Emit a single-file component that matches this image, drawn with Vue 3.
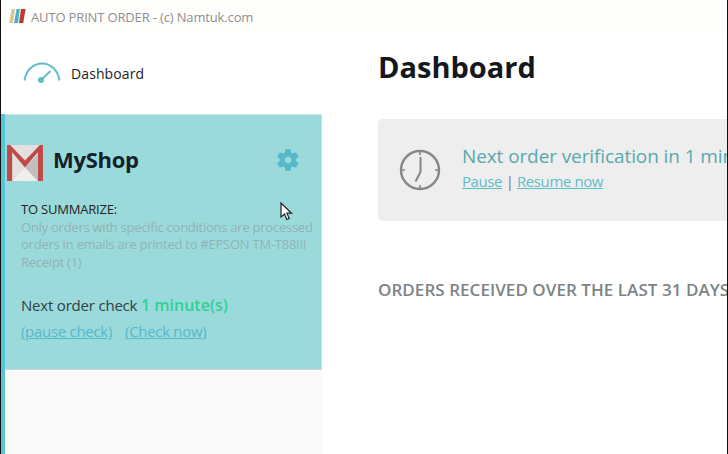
<template>
  <div class="window">
    <header class="titlebar">
      <svg class="app-logo" width="17" height="16" viewBox="0 0 17 16">
        <path d="M2.500 1h3.600L3.800 15H.4z" fill="#d6c88c" />
        <path d="M7.500 1h3.400L9 15H5z" fill="#46b4c6" />
        <path d="M12 1h4.600L14.200 15H10z" fill="#c0392f" />
      </svg>
      <span class="title">AUTO PRINT ORDER - (c) Namtuk.com</span>
    </header>

    <div class="body">
      <aside class="sidebar">
        <div class="nav">
          <svg class="gauge" width="38" height="24" viewBox="0 0 38 24" fill="none">
            <path d="M1.500 20.500C3 10 10.500 3.500 19 3.500s16 6.500 17.500 17" stroke="#62bccb" stroke-width="2" />
            <path d="M18 20 27.500 11" stroke="#62bccb" stroke-width="2" />
            <circle cx="18" cy="20" r="3" fill="#62bccb" />
          </svg>
          <span>Dashboard</span>
        </div>

        <div class="panel">
          <section class="shop">
            <div class="shop-head">
              <svg class="gmail" width="38" height="38" viewBox="0 0 37 37">
                <rect x="1" y="1" width="35" height="35" fill="#e3e1df" />
                <path d="M6 36V8l12.500 15L31 8v28h5V1h-3L18.500 16 4 1H1v35z" fill="#bf4a4a" />
                <path d="M6 36 18.500 23 31 36z" fill="#f0eeec" />
                <path d="M18.500 23 31 10v26z" fill="#c2c0be" />
              </svg>
              <h2>MyShop</h2>
              <svg class="cog" width="26" height="26" viewBox="0 0 24 24">
                <path fill="#56b9ca" d="M19.400 13c.05-.33.07-.66.07-1s-.02-.67-.07-1l2.100-1.640a.5.5 0 0 0 .12-.64l-2-3.460a.5.5 0 0 0-.6-.22l-2.490 1a7.300 7.300 0 0 0-1.730-1l-.38-2.650A.5.5 0 0 0 13.930 2h-4a.5.5 0 0 0-.49.42L9.060 5.070a7.600 7.600 0 0 0-1.730 1l-2.490-1a.5.5 0 0 0-.6.22l-2 3.460a.5.5 0 0 0 .12.640L4.460 11c-.05.33-.08.67-.08 1s.03.67.08 1l-2.100 1.640a.5.5 0 0 0-.12.64l2 3.460c.12.22.38.3.6.22l2.490-1c.52.4 1.100.74 1.730 1l.38 2.650c.04.24.25.42.49.42h4c.24 0 .45-.18.49-.42l.38-2.650a7.600 7.600 0 0 0 1.730-1l2.490 1c.22.08.48 0 .6-.22l2-3.460a.5.5 0 0 0-.12-.64zM12 15a3 3 0 1 1 0-6 3 3 0 0 1 0 6z" />
              </svg>
            </div>

            <div class="summary">
              <div class="summary-title">TO SUMMARIZE:</div>
              <p>Only orders with specific conditions are processed<br />orders in emails are printed to #EPSON TM-T88III<br />Receipt (1)</p>
            </div>

            <div class="next">Next order check <b>1 minute(s)</b></div>
            <div class="links"><a>(pause check)</a><a>(Check now)</a></div>
          </section>
          <div class="panel-rest"></div>
        </div>
      </aside>

      <main class="main">
        <h1>Dashboard</h1>
        <div class="notice">
          <svg class="clock" width="42" height="42" viewBox="0 0 42 42" fill="none" stroke="#868686">
            <circle cx="21" cy="21" r="19" stroke-width="2.400" />
            <path d="M21 2v4M21 36v4M2 21h4M36 21h4" stroke-width="1.600" />
            <path d="M21.500 8v15l-5 9.500" stroke-width="2" />
          </svg>
          <div class="notice-text">
            <div class="notice-title">Next order verification in 1 minute(s)</div>
            <div class="notice-links"><a>Pause</a> | <a>Resume now</a></div>
          </div>
        </div>
        <h3>ORDERS RECEIVED OVER THE LAST 31 DAYS</h3>
      </main>
    </div>

    <svg class="cursor" width="13" height="19" viewBox="0 0 13 19">
      <path d="M1 1v14l3.500-3 2.300 5.500 2.400-1-2.300-5.300H11.500z" fill="#fff" stroke="#222" stroke-width="1.200" />
    </svg>
  </div>
</template>

<script setup>
</script>

<style>
html, body { margin: 0; background: #fff; }
</style>

<style scoped>
.window {
  position: relative;
  width: 728px;
  height: 454px;
  box-sizing: border-box;
  overflow: hidden;
  border-left: 1px solid #111;
  border-right: 1px solid #111;
  background: #fff;
  font-family: "Open Sans", "Noto Sans", sans-serif;
  display: flex;
  flex-direction: column;
}

.titlebar {
  height: 34px;
  flex: none;
  display: flex;
  align-items: center;
  padding-left: 8px;
  gap: 5px;
  background: #fefefc;
}
.app-logo { margin-top: -3px; }
.title { color: #8f8f8f; font-size: 13px; letter-spacing: -0.15px; }

.body { flex: 1; display: flex; min-height: 0; }

.sidebar { width: 321px; flex: none; display: flex; flex-direction: column; }

.nav {
  height: 80px;
  flex: none;
  display: flex;
  align-items: center;
  padding-left: 22px;
  gap: 10px;
  font-size: 14px;
  letter-spacing: 0.1px;
  color: #222;
}
.nav span { margin-top: -2px; }
.gauge { margin-top: -4px; }

.panel {
  flex: 1;
  display: flex;
  flex-direction: column;
  border-left: 4px solid #5cc4d6;
}
.shop {
  height: 256px;
  box-sizing: border-box;
  background: #9bdadb;
  border-top: 1px solid #c4ecee;
  border-bottom: 1px solid #c9d6d6;
  border-right: 1px solid #c8e0e0;
}
.panel-rest { flex: 1; background: #f9f9f9; }

.shop-head {
  display: flex;
  align-items: center;
  height: 37px;
  margin-top: 29px;
  margin-left: 1px;
}
.shop-head h2 {
  margin: -8px 0 0 9px;
  font-size: 22px;
  font-weight: 700;
  letter-spacing: -0.3px;
  color: #14202a;
}
.cog { margin-left: auto; margin-right: 20px; margin-top: -6px; }

.summary { margin: 20px 0 0 16px; font-size: 13px; line-height: 17.700px; }
.summary-title { color: #222; letter-spacing: -0.2px; }
.summary p { margin: 0; color: #8fb3b5; letter-spacing: -0.25px; white-space: nowrap; }

.next { margin: 22px 0 0 16px; font-size: 15px; line-height: 22px; letter-spacing: -0.2px; color: #2f4244; }
.next b { font-size: 16px; font-weight: 600; letter-spacing: 0; color: #2fd196; }

.links { margin: 5px 0 0 16px; font-size: 15px; letter-spacing: -0.3px; display: flex; gap: 13px; }
.links a { color: #55b8cc; text-decoration: underline; }

.main { flex: 1; min-width: 0; padding-left: 56px; overflow: hidden; }
.main h1 {
  margin: 13px 0 0;
  font-size: 29px;
  line-height: 40px;
  font-weight: 700;
  color: #14181c;
}
.notice {
  margin-top: 32px;
  height: 102px;
  width: 420px;
  box-sizing: border-box;
  background: #eeeeee;
  border-radius: 5px;
  display: flex;
  align-items: center;
  padding-left: 21px;
  gap: 21px;
}
.notice-text { white-space: nowrap; margin-top: -6px; }
.notice-title { font-size: 19px; letter-spacing: -0.1px; color: #58a8ae; line-height: 25px; }
.notice-links { font-size: 15px; letter-spacing: -0.4px; color: #777; margin-top: 2px; }
.notice-links a { color: #5fbccb; text-decoration: underline; }

.main h3 {
  margin: 57px 0 0;
  font-size: 17px;
  font-weight: 600;
  letter-spacing: 0.05px;
  color: #7e8385;
  white-space: nowrap;
}

.cursor { position: absolute; left: 279px; top: 202px; }
</style>
